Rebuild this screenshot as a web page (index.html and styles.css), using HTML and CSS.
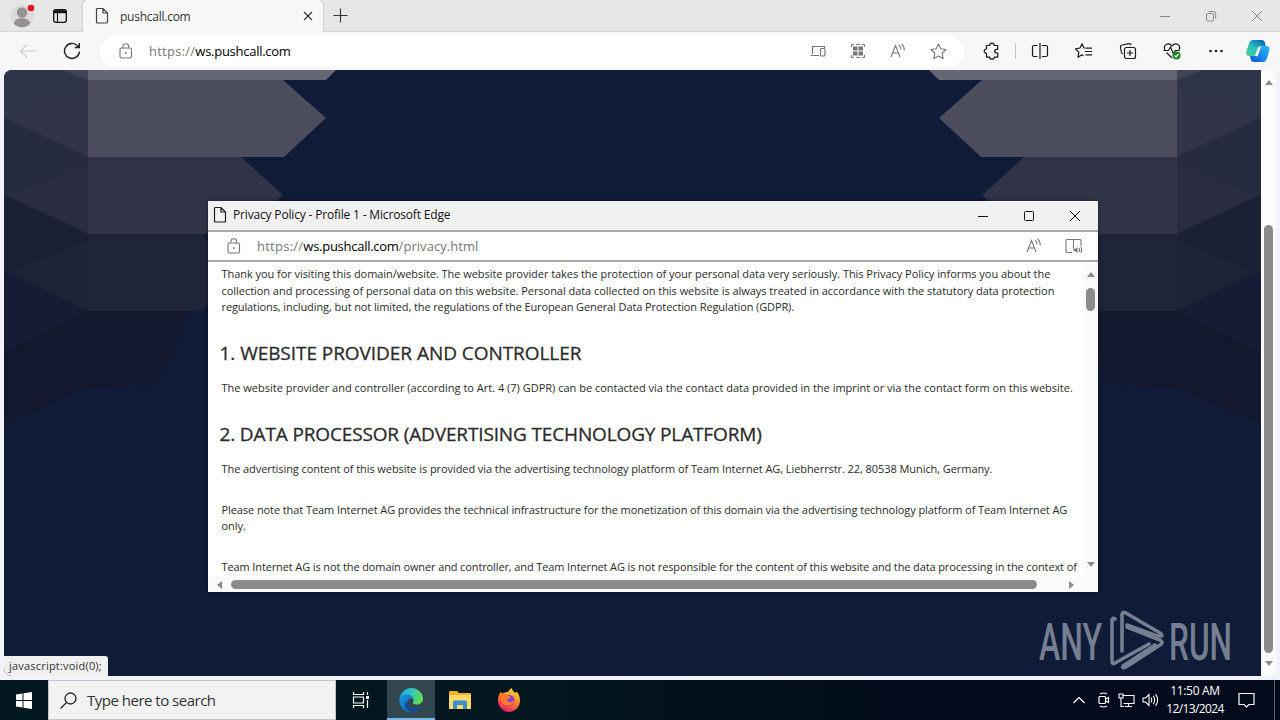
FILE: index.html
```
<!DOCTYPE html>
<html lang="en">
<head>
    <meta charset="UTF-8">
    <meta name="viewport" content="width=device-width, initial-scale=1.0">
    <title>pushcall.com</title>
    <link rel="stylesheet" href="styles.css">
</head>
<body>
    <div class="desktop">
        <!-- Tab strip -->
        <div class="tab-strip">
            <div class="tab-tools">
                <svg class="avatar" width="28" height="28" viewBox="0 0 28 28">
                    <circle cx="14" cy="14" r="11.5" fill="#dcdbda"/>
                    <circle cx="14" cy="10.5" r="5.2" fill="#96928f"/>
                    <path d="M6 21.5c0-7 16-7 16 0-3 5-13 5-16 0z" fill="#96928f"/>
                    <circle cx="23" cy="6" r="3.3" fill="#e3131f"/>
                </svg>
                <svg class="workspace" width="14" height="14" viewBox="0 0 14 14" fill="none" stroke="#111">
                    <rect x=".7" y=".7" width="12.6" height="12.6" rx="2" stroke-width="1.3"/>
                    <path d="M1 2.7h12" stroke-width="3"/><path d="M4.5 4v9" stroke-width="1.1"/>
                </svg>
            </div>
            <div class="tab">
                <svg width="14" height="18" viewBox="0 0 14 18" fill="none" stroke="#444" stroke-width="1.2"><path d="M1.5 2.5q0-1 1-1H8l4.500 4.500v9q0 1-1 1h-9q-1 0-1-1zM8 1.500V6h4.500"/></svg>
                <span class="tab-title">pushcall.com</span>
                <svg class="tab-close" width="10" height="10" viewBox="0 0 10 10" stroke="#333" stroke-width="1.1"><path d="M1 1l8 8M9 1L1 9"/></svg>
            </div>
            <svg class="new-tab" width="15" height="15" viewBox="0 0 15 15" stroke="#333" stroke-width="1.1"><path d="M7.500 .5v14M.5 7.500h14"/></svg>
            <div class="window-controls">
                <svg width="12" height="12" viewBox="0 0 12 12" fill="none" stroke="#888"><path d="M1 6.500h10"/></svg>
                <svg width="12" height="12" viewBox="0 0 12 12" fill="none" stroke="#888"><rect x="1.500" y="3.500" width="7" height="7.500" rx="1.500"/><path d="M3.500 1.500h5q2.200 0 2.200 2.200v5"/></svg>
                <svg width="12" height="12" viewBox="0 0 12 12" fill="none" stroke="#888"><path d="M1 1l10 10M11 1L1 11"/></svg>
            </div>
        </div>

        <!-- Toolbar -->
        <div class="toolbar">
            <svg class="back" width="18" height="18" viewBox="0 0 18 18" fill="none" stroke="#cecece" stroke-width="1.200"><path d="M17 9H2M8 2.500L1.500 9 8 15.500"/></svg>
            <svg class="reload" width="18" height="18" viewBox="0 0 18 18" fill="none" stroke="#222" stroke-width="1.400"><path d="M16.500 9.500a7.500 7.500 0 1 1-2-5.700l1.700 1.700M16.300 1v4.500h-4.500"/></svg>
            <div class="address">
                <svg class="lock" width="14" height="16" viewBox="0 0 14 16" fill="none" stroke="#777" stroke-width="1.100"><rect x="1" y="5" width="11.500" height="10" rx="1.500"/><path d="M4 5V3.500q0-2.700 2.800-2.700t2.800 2.700V5"/><circle cx="6.800" cy="10" r=".9" fill="#777" stroke="none"/></svg>
                <div class="url main-url">https://<b>ws.pushcall.com</b></div>
                <div class="address-icons">
                    <svg width="16" height="16" viewBox="0 0 16 16" fill="none" stroke="#777" stroke-width="1.200"><path d="M2.500 11V3.500h12V5M.5 12.500h8.500"/><rect x="10.500" y="5.500" width="4.500" height="7.500" rx="1"/></svg>
                    <svg width="16" height="16" viewBox="0 0 16 16" fill="#777" stroke="#777"><path d="M1.500 4V1.500H4M12 1.500h2.500V4M14.500 12v2.500H12M4 14.500H1.500V12M6 1.500h4M6 14.500h4" fill="none"/><path d="M3 3.500h4.500V7.500H3zM8.500 3.500H13V7.500H8.500zM3 8.500h4.500v4H3zM8.500 8.500H13v4H8.500z" stroke="none"/></svg>
                    <svg width="16" height="16" viewBox="0 0 16 16" fill="none" stroke="#777" stroke-width="1.100"><path d="M1 14L5.500 2.500 10 14M2.700 10h5.700M9 2.200q2 1.500 2 4M11.500 .8q3 2.500 2.800 6.500"/></svg>
                    <svg width="17" height="17" viewBox="0 0 17 17" fill="none" stroke="#777" stroke-width="1.100" stroke-linejoin="round"><path d="M8.500 1l2.300 4.800 5.200.7-3.800 3.600.9 5.300-4.600-2.500-4.600 2.500.9-5.300L1 6.500l5.200-.7z"/></svg>
                </div>
            </div>
            <div class="toolbar-icons">
                <svg width="18" height="18" viewBox="0 0 18 18" fill="none" stroke="#1a1a1a" stroke-width="1.200" stroke-linejoin="round"><path d="M3.500 3.500h3.200c0-3.200 4.600-3.200 4.600 0h3.400v3.700c-4 .2-4 4 0 4v4h-3.400c0 2.600-4.600 2.600-4.600 0H3.500V11.300C.5 11.300.5 7 3.500 7z"/></svg>
                <i class="divider"></i>
                <svg width="18" height="18" viewBox="0 0 18 18" fill="none" stroke="#1a1a1a" stroke-width="1.200"><path d="M6.500 3.500H3q-1.500 0-1.500 1.500v8q0 1.500 1.500 1.500h3.500M11 3.500h4q1.500 0 1.500 1.500v8q0 1.500-1.500 1.500h-4M9 1v16"/></svg>
                <svg width="18" height="18" viewBox="0 0 18 18" fill="none" stroke="#1a1a1a" stroke-width="1.200" stroke-linejoin="round"><path d="M10 6h-1L7 1.800 5 6l-4.500.8 3.300 3.400-.8 5 4-2.400 1.500 1M10.500 6.200h6.500M10 9.500h7M10.500 12.800H17"/></svg>
                <svg width="18" height="18" viewBox="0 0 18 18" fill="none" stroke="#1a1a1a" stroke-width="1.200"><rect x="5.500" y="5.500" width="11" height="11" rx="2"/><path d="M11 8v6M8 11h6M4 12q-1.500-.5-1.700-2L1.500 5Q1.300 3.200 3 3l7-1.300q1.800-.2 2.200 1.500"/></svg>
                <svg width="18" height="18" viewBox="0 0 18 18" fill="none" stroke="#1a1a1a" stroke-width="1.200"><path d="M2 8C-.5 3 5.500-.5 9 4c3.500-4.500 9.500-1 7 4M3.500 10.500l5.500 5.500M.5 8.500h5L7.500 5l3 7 1.700-3.500h4.300"/><circle cx="13.500" cy="13.500" r="4" fill="#16831c" stroke="none"/><path d="M11.500 13.500l1.500 1.500 2.500-3" stroke="#fff"/></svg>
                <svg width="18" height="18" viewBox="0 0 18 18" fill="#1a1a1a"><circle cx="3.500" cy="9" r="1.300"/><circle cx="9" cy="9" r="1.300"/><circle cx="14.500" cy="9" r="1.300"/></svg>
            </div>
            <svg class="copilot" width="24" height="23" viewBox="0 0 24 23">
                <defs>
                    <linearGradient id="copLeft" x1="0" y1="1" x2=".7" y2="0"><stop offset="0" stop-color="#3fd08b"/><stop offset=".5" stop-color="#2dc5bd"/><stop offset="1" stop-color="#086fb5"/></linearGradient>
                    <linearGradient id="copRight" x1="1" y1="0" x2="0" y2="1"><stop offset="0" stop-color="#2fb9ed"/><stop offset=".6" stop-color="#1484e8"/><stop offset="1" stop-color="#0754c8"/></linearGradient>
                </defs>
                <path d="M17 6h3q4 0 3.500 4l-2.700 9q-1 3-4 3H8q-3 0-3.500-3.500L4 16h5q2 0 3-3l1.500-4q1-3 3.500-3z" fill="url(#copRight)"/>
                <path d="M7 0h9q2.500 0 3 3l.7 3H16q-2.500 0-3.500 3l-1.500 4q-1 3-3 3H3Q-.5 16 .5 11L3 3.500Q4 0 7 0z" fill="url(#copLeft)"/>
                <path d="M13.500 7l-3.200 9" stroke="#fff" stroke-width="2.500"/>
            </svg>
        </div>

        <!-- Page -->
        <div class="viewport">
            <div class="page">
                <svg class="backdrop" viewBox="4 70 1257 606">
                    <defs>
                        <linearGradient id="fade" gradientUnits="userSpaceOnUse" x1="120" y1="330" x2="160" y2="400"><stop offset="0" stop-color="#14182e"/><stop offset=".5" stop-color="#14182e"/><stop offset="1" stop-color="#0f1b37"/></linearGradient>
                        <g id="folds">
                            <path d="M4 311H190L160 388H88L4 425z" fill="url(#fade)"/>
                            <path d="M4 70H88V157L4 118z" fill="#303448"/>
                            <path d="M4 118L88 88V157z" fill="#323549"/>
                            <path d="M62 70H88V80z" fill="#414455"/>
                            <path d="M4 118L88 157V234L4 195z" fill="#272b3f"/>
                            <path d="M10 195L88 165V234z" fill="#2a2d42"/>
                            <path d="M4 195L88 234V311L4 272z" fill="#1c2035"/>
                            <path d="M12 272L88 240V311z" fill="#1f2338"/>
                            <path d="M4 272L88 311 4 352z" fill="#181b35"/>
                            <path d="M88 70H336L326 80H88z" fill="#656673"/>
                            <path d="M88 80H283L326 118 284 157H88z" fill="#4b4c5c"/>
                            <path d="M88 157H241L283 195 241 234H88z" fill="#313347"/>
                            <path d="M88 234H201L241 272 201 311H88z" fill="#202439"/>
                        </g>
                    </defs>
                    <use href="#folds"/>
                    <use href="#folds" transform="translate(1265 0) scale(-1 1)"/>
                    <g class="watermark">
                        <text x="1039" y="660" textLength="63" lengthAdjust="spacingAndGlyphs">ANY</text>
                        <text x="1169" y="660" textLength="63" lengthAdjust="spacingAndGlyphs">RUN</text>
                        <g fill="none" stroke="#767e91" stroke-width="3.600" stroke-linejoin="round" stroke-linecap="round">
                            <path d="M1115 619q-3-2-3 2v40q0 4 3 2L1149 644"/>
                            <path d="M1122 651v-36q0-4 4-2l34 20q4 3 0 3h-3L1127 625"/>
                            <path d="M1127 627L1160 640q4 3 0 5l-34 22q-4 2-3-1l32-21"/>
                        </g>
                    </g>
                </svg>
            </div>
            <div class="page-scroll">
                <i class="arrow up"></i>
                <i class="thumb"></i>
                <i class="arrow down"></i>
            </div>
        </div>

        <div class="status-bubble">javascript:void(0);</div>

        <!-- Privacy policy popup -->
        <div class="popup">
            <div class="popup-title">
                <svg width="14" height="18" viewBox="0 0 14 18" fill="none" stroke="#222" stroke-width="1.200"><path d="M1.500 2.500q0-1 1-1H8l4.500 4.500v9q0 1-1 1h-9q-1 0-1-1zM8 1.500V6h4.500"/></svg>
                <span class="popup-name">Privacy Policy - Profile 1 - Microsoft Edge</span>
                <div class="popup-controls">
                    <svg width="12" height="12" viewBox="0 0 12 12" fill="none" stroke="#111"><path d="M1 6.500h10"/></svg>
                    <svg width="12" height="12" viewBox="0 0 12 12" fill="none" stroke="#111"><rect x="1.500" y="1.500" width="9" height="9" rx="1"/></svg>
                    <svg width="12" height="12" viewBox="0 0 12 12" fill="none" stroke="#111"><path d="M1 1l10 10M11 1L1 11"/></svg>
                </div>
            </div>
            <div class="popup-address">
                <svg class="lock" width="14" height="16" viewBox="0 0 14 16" fill="none" stroke="#777" stroke-width="1.100"><rect x="1" y="5" width="11.500" height="10" rx="1.500"/><path d="M4 5V3.500q0-2.700 2.800-2.700t2.800 2.700V5"/><circle cx="6.800" cy="10" r=".9" fill="#777" stroke="none"/></svg>
                <div class="url popup-url">https://<b>ws.pushcall.com</b><span class="path">/privacy.html</span></div>
                <svg class="read-aloud" width="16" height="16" viewBox="0 0 16 16" fill="none" stroke="#777" stroke-width="1.100"><path d="M1 14L5.500 2.500 10 14M2.700 10h5.700M9 2.200q2 1.500 2 4M11.500 .8q3 2.500 2.800 6.500"/></svg>
                <svg width="18" height="16" viewBox="0 0 18 16" fill="none" stroke="#777" stroke-width="1.100"><path d="M7 14.500H2q-1 0-1-1v-11q0-1 1-1h6.500V11M8.500 1.500H15q1 0 1 1V8"/><path d="M8.500 11H10l2.500-2v6L10 13H8.500z" fill="#777" stroke="none"/><path d="M14 10q1 1.800 0 4M15.700 9q2 2.800 0 6"/></svg>
            </div>
            <div class="popup-body">
                <div class="policy">
                    <p><span class="line-intro">Thank you for visiting this domain/website. The website provider takes the protection of your personal data very seriously. This Privacy Policy informs you about the</span><br>
                    <span class="line-collection">collection and processing of personal data on this website. Personal data collected on this website is always treated in accordance with the statutory data protection</span><br>
                    <span class="line-gdpr">regulations, including, but not limited, the regulations of the European General Data Protection Regulation (GDPR).</span></p>
                    <h2>1. WEBSITE PROVIDER AND CONTROLLER</h2>
                    <p>The website provider and controller (according to Art. 4 (7) GDPR) can be contacted via the contact data provided in the imprint or via the contact form on this website.</p>
                    <h2 class="processor">2. DATA PROCESSOR (ADVERTISING TECHNOLOGY PLATFORM)</h2>
                    <p class="line-address">The advertising content of this website is provided via the advertising technology platform of Team Internet AG, Liebherrstr. 22, 80538 Munich, Germany.</p>
                    <p class="line-note">Please note that Team Internet AG provides the technical infrastructure for the monetization of this domain via the advertising technology platform of Team Internet AG<br>
                    only.</p>
                    <p class="line-owner">Team Internet AG is not the domain owner and controller, and Team Internet AG is not responsible for the content of this website and the data processing in the context of</p>
                </div>
                <div class="popup-vscroll">
                    <i class="arrow up"></i>
                    <i class="thumb"></i>
                    <i class="arrow down"></i>
                </div>
            </div>
            <div class="popup-hscroll">
                <i class="arrow left"></i>
                <i class="thumb"></i>
                <i class="arrow right"></i>
            </div>
        </div>

        <!-- Taskbar -->
        <div class="taskbar">
            <div class="start">
                <svg width="16" height="17" viewBox="0 0 16 17" fill="#fff"><path d="M0 2.500l6.500-1v6.500H0zM7.500 1.300L16 0v8H7.500zM0 9h6.500v6.500L0 14.500zM7.500 9H16v8l-8.500-1.300z"/></svg>
            </div>
            <div class="search">
                <svg width="17" height="17" viewBox="0 0 17 17" fill="none" stroke="#222" stroke-width="1.300"><circle cx="10.500" cy="6.500" r="5.500"/><path d="M6.500 10.500L.5 16.500"/></svg>
                <span class="search-text">Type here to search</span>
            </div>
            <div class="task-item">
                <svg width="18" height="18" viewBox="0 0 18 18" fill="none" stroke="#fff" stroke-width="1.200"><path d="M1.500 1v2.500h10V1M1.500 17v-2.500h10V17M1.500 6h10v6h-10zM15.500 1v3M15.500 9v8"/><path d="M14 5h3v3h-3z" fill="#fff" stroke="none"/></svg>
            </div>
            <div class="task-item active">
                <svg width="24" height="24" viewBox="0 0 24 24">
                    <defs>
                        <linearGradient id="edgeTop" x1="0" y1="0" x2="1" y2=".3"><stop offset="0" stop-color="#1b9de2"/><stop offset=".5" stop-color="#2fc3c8"/><stop offset="1" stop-color="#62d957"/></linearGradient>
                        <linearGradient id="edgeLow" x1="0" y1="0" x2="1" y2="1"><stop offset="0" stop-color="#1b9de2"/><stop offset="1" stop-color="#0c4d9c"/></linearGradient>
                    </defs>
                    <path d="M.5 11C1.500 4 6.500 0 12.200 0 19 0 24 5 24 10.500c0 4-3 6-6.500 6-3 0-4.300-1-3.500-2.500C16 10 12 7 8 7 4 7 1.500 8.500.5 11z" fill="url(#edgeTop)"/>
                    <path d="M.3 13C0 8.500 4 6.500 8 6.500c4 0 6.500 2.500 6.200 5C11 9.500 8 12 8.500 15.500 9.200 20 15 22 21.500 18.500 19.500 22 16 24 12 24 5.500 24 .5 19 .3 13z" fill="url(#edgeLow)"/>
                    <path d="M8.500 13c-1.500 6 6 10.500 13.500 5.500-4 5.500-10 6-13.500 3S5 14 8.500 13z" fill="#11489a"/>
                </svg>
            </div>
            <div class="task-item">
                <svg width="22" height="20" viewBox="0 0 22 20"><path d="M0 2q0-1 1-1h7l2 2h11q1 0 1 1v14q0 1-1 1H1q-1 0-1-1z" fill="#f0b429"/><path d="M0 5h22v13q0 1-1 1H1q-1 0-1-1z" fill="#ffd968"/><path d="M4 19v-7q0-1.500 1.500-1.500h11q1.500 0 1.500 1.500v7h-4v-4H8v4z" fill="#3b8ed0"/></svg>
            </div>
            <div class="task-item">
                <svg width="24" height="24" viewBox="0 0 24 24">
                    <defs><linearGradient id="fox" x1=".8" y1="0" x2=".3" y2="1"><stop offset="0" stop-color="#ffe34a"/><stop offset=".45" stop-color="#ff8a1f"/><stop offset="1" stop-color="#e8176a"/></linearGradient></defs>
                    <path d="M1 12C1 8.500 2 6 4 3.500l1 2.200C8 4 10 4 11 4c1-2 2-3 4-4 0 3 2 3.500 3.500 5l1-1.500C22 6 23 9 23 12.500 23 19 18 24 12 24S1 18.500 1 12z" fill="url(#fox)"/>
                    <circle cx="12" cy="12.500" r="5.600" fill="#8140d8"/>
                    <path d="M4.500 7q4-1.500 7 .8l2.500 1.500q-1 2-4 1.700c0 4 5 4 7 1 .5 4-3 6-6 5.500-5 0-8-4.500-6.500-10.500z" fill="#ff7a29"/>
                </svg>
            </div>
            <div class="tray">
                <svg class="chevron" width="12" height="8" viewBox="0 0 12 8" fill="none" stroke="#fff" stroke-width="1.200"><path d="M.5 7L6 1.500 11.500 7"/></svg>
                <svg width="14" height="16" viewBox="0 0 14 16" fill="none" stroke="#fff" stroke-width="1.200"><rect x="2" y="4.500" width="6.500" height="7" rx="1"/><path d="M8.500 7l3-1.500v5l-3-1.500M3 2q3.500-2 7 0M3 14q3.500 2 7 0"/></svg>
                <svg width="17" height="16" viewBox="0 0 17 16" fill="none" stroke="#fff" stroke-width="1.100"><path d="M5 3.500h11v8H5.500M10.500 11.500V14M7 14.500h7M1 2h4v4H1zM3 6v8.500h3"/></svg>
                <svg width="17" height="16" viewBox="0 0 17 16" fill="none" stroke="#fff" stroke-width="1.100"><path d="M1 6h2.500L7 2.500v11L3.500 10H1zM9 5.500q1.500 2.500 0 5M11.300 3.800q2.700 4.200 0 8.400M13.600 2q4 6 0 12"/></svg>
                <div class="clock"><span class="time">11:50 AM</span><span class="date">12/13/2024</span></div>
                <svg class="notify" width="17" height="17" viewBox="0 0 17 17" fill="none" stroke="#fff" stroke-width="1.200"><path d="M1 1.500h15v11h-5L8.500 15 6 12.500H1z"/></svg>
                <i class="show-desktop"></i>
            </div>
        </div>
    </div>
</body>
</html>
```
FILE: styles.css
```
* {
    box-sizing: border-box;
}

body {
    margin: 0;
    font-family: 'Open Sans', 'Noto Sans', sans-serif;
    background-color: #f6f6f8;
    overflow: hidden;
}

svg {
    display: block;
    flex-shrink: 0;
}

.desktop {
    position: relative;
    width: 1280px;
    height: 720px;
    display: flex;
    flex-direction: column;
}

/* Tab strip */
.tab-strip {
    height: 32px;
    display: flex;
    align-items: center;
    background-color: #e7e7e7;
    border-bottom: 1px solid #d6d6d6;
}

.tab-tools {
    width: 83px;
    display: flex;
    align-items: center;
    padding-left: 8px;
    gap: 17px;
}

.tab {
    width: 240px;
    height: 32px;
    margin-bottom: -1px;
    display: flex;
    align-items: center;
    padding: 0 10px 0 12px;
    background-color: #f7f7f7;
    border-radius: 5px 5px 0 0;
    box-shadow: 0 0 2px rgba(0, 0, 0, 0.3);
    clip-path: inset(-2px -2px 0 -2px);
}

.tab-title {
    flex: 1;
    padding-left: 11px;
    font-size: 12px;
    letter-spacing: -0.25px;
    color: #333;
}

.new-tab {
    margin-left: 10px;
}

.window-controls {
    margin-left: auto;
    margin-right: 17px;
    display: flex;
    gap: 34px;
}

/* Toolbar */
.toolbar {
    height: 38px;
    display: flex;
    align-items: center;
    background-color: #f7f7f7;
}

.back {
    margin-left: 19px;
}

.reload {
    margin-left: 26px;
}

.address {
    width: 864px;
    height: 32px;
    margin-left: 19px;
    display: flex;
    align-items: center;
    padding: 0 17px 0 19px;
    background-color: #fff;
    border-radius: 16px;
}

.url {
    flex: 1;
    padding-left: 16px;
    font-size: 13px;
    letter-spacing: 0.25px;
    color: #777;
    white-space: nowrap;
}

.url b {
    font-weight: 400;
    letter-spacing: -0.27px;
    color: #000;
}

.url .path {
    letter-spacing: 0.05px;
}

.address-icons {
    display: flex;
    align-items: center;
    gap: 24px;
}

.toolbar-icons {
    display: flex;
    align-items: center;
    gap: 26px;
    margin-left: 19px;
}

.divider {
    width: 1px;
    height: 16px;
    margin: 0 -11px 0 -12px;
    background-color: #c9c9c9;
}

.copilot {
    margin-left: 21px;
}

/* Page area */
.viewport {
    height: 610px;
    display: flex;
    padding: 0 4px 4px 4px;
    background-color: #f2f3f8;
}

.page {
    width: 1257px;
    height: 606px;
    background-color: #0f1b37;
    border-radius: 8px 0 0 8px;
    overflow: hidden;
}

.backdrop {
    width: 1257px;
    height: 606px;
}

.watermark text {
    font-family: Roboto, sans-serif;
    font-size: 52px;
    font-weight: 500;
    fill: #767e91;
}

.page-scroll {
    width: 15px;
    height: 606px;
    display: flex;
    flex-direction: column;
    align-items: center;
    padding: 10px 0;
    background-color: #fcfcfc;
    border-radius: 0 8px 8px 0;
}

.thumb {
    background-color: #8b8b8b;
    border-radius: 5px;
}

.page-scroll .thumb {
    width: 9px;
    height: 428px;
    margin-top: 140px;
}

.arrow {
    border: 4.5px solid transparent;
}

.arrow.up {
    border-top: 0;
    border-bottom: 5px solid #8b8b8b;
}

.arrow.down {
    border-bottom: 0;
    border-top: 5px solid #8b8b8b;
    margin-top: auto;
}

.arrow.left {
    border-left: 0;
    border-right: 5px solid #8b8b8b;
}

.arrow.right {
    border-right: 0;
    border-left: 5px solid #8b8b8b;
}

.status-bubble {
    position: absolute;
    left: 4px;
    top: 656px;
    width: 104px;
    height: 20px;
    padding-left: 5px;
    font-size: 11px;
    letter-spacing: 0.2px;
    line-height: 20px;
    color: #333;
    background-color: #f0f0f0;
    border-radius: 0 3px 0 8px;
    white-space: nowrap;
}

/* Popup window */
.popup {
    position: absolute;
    left: 208px;
    top: 201px;
    width: 890px;
    height: 391px;
    display: flex;
    flex-direction: column;
    background-color: #fff;
    box-shadow: 0 0 3px rgba(0, 0, 0, 0.5);
}

.popup-title {
    height: 31px;
    display: flex;
    align-items: center;
    padding: 0 17px 2px 5px;
    background-color: #f1f1f1;
    border-bottom: 2px solid #aaa;
}

.popup-name {
    padding-left: 6px;
    font-size: 12px;
    letter-spacing: -0.17px;
    color: #111;
    white-space: nowrap;
}

.popup-controls {
    margin-left: auto;
    display: flex;
    gap: 34px;
    padding-top: 2px;
}

.popup-address {
    height: 30px;
    display: flex;
    align-items: center;
    padding: 0 15px 0 19px;
    border-bottom: 2px solid #aaa;
}

.read-aloud {
    margin-right: 23px;
}

.popup-body {
    height: 315px;
    display: flex;
}

.policy {
    width: 875px;
    height: 315px;
    padding: 4px 0 0 13.5px;
    overflow: hidden;
    white-space: nowrap;
    color: #2b2b2b;
}

.policy p {
    margin: 0 0 24px;
    font-size: 11px;
    line-height: 16.5px;
}

.policy h2 {
    margin: 25.5px 0 15px -2px;
    font-size: 19px;
    font-weight: 400;
    letter-spacing: -0.05px;
    line-height: 24px;
    -webkit-text-stroke: 0.3px #2b2b2b;
}

.policy .processor {
    letter-spacing: -0.14px;
}

.line-intro {
    letter-spacing: -0.05px;
}

.line-collection {
    letter-spacing: -0.04px;
}

.line-gdpr {
    letter-spacing: -0.11px;
}

.line-address {
    letter-spacing: -0.07px;
}

.line-note {
    letter-spacing: -0.083px;
}

.line-owner {
    letter-spacing: -0.118px;
}

.popup-vscroll {
    width: 15px;
    display: flex;
    flex-direction: column;
    align-items: center;
    padding: 10px 0;
    background-color: #fafafa;
}

.popup-vscroll .thumb {
    width: 9px;
    height: 23px;
    margin-top: 11px;
}

.popup-hscroll {
    height: 15px;
    display: flex;
    align-items: center;
    padding: 0 24px 0 9px;
    background-color: #fafafa;
}

.popup-hscroll .thumb {
    width: 806px;
    height: 9px;
    margin-left: 9px;
    margin-right: auto;
}

/* Taskbar */
.taskbar {
    height: 40px;
    display: flex;
    background: linear-gradient(90deg, #02171f 0, #02171f 520px, #020b1b 900px, #020a1b 100%);
}

.start {
    width: 48px;
    display: flex;
    align-items: center;
    justify-content: center;
}

.search {
    width: 288px;
    display: flex;
    align-items: center;
    padding-left: 11px;
    background-color: #f2f2f2;
    border: 1px solid #c4c4c4;
}

.search-text {
    padding-left: 10px;
    font-size: 15px;
    letter-spacing: -0.5px;
    color: #333;
    white-space: nowrap;
}

.task-item {
    width: 49px;
    display: flex;
    align-items: center;
    justify-content: center;
}

.task-item.active {
    width: 48px;
    margin-left: 2px;
    background-color: #32464f;
    border-bottom: 2px solid #76b9ed;
    padding-top: 2px;
}

.tray {
    margin-left: auto;
    display: flex;
    align-items: center;
    color: #fff;
    gap: 7px;
}

.chevron {
    margin-right: 5px;
}

.clock {
    width: 58px;
    display: flex;
    flex-direction: column;
    align-items: center;
    font-size: 12px;
    line-height: 18px;
    letter-spacing: -0.3px;
    white-space: nowrap;
}

.date {
    letter-spacing: -0.6px;
}

.notify {
    margin-left: 7px;
}

.show-desktop {
    width: 6px;
    height: 40px;
    margin-left: 12px;
    border-left: 1px solid #59606c;
}
```
